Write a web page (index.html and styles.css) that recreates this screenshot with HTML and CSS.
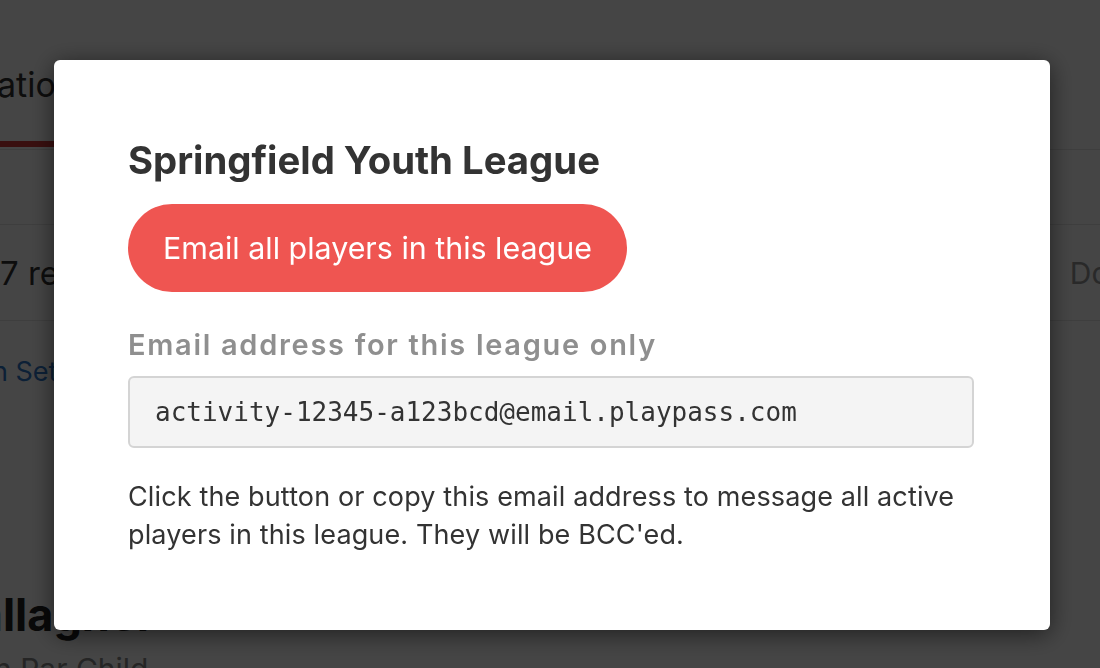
FILE: index.html
```html
<!DOCTYPE html>
<html lang="en">
<head>
<meta charset="utf-8">
<title>Springfield Youth League</title>
<link rel="stylesheet" href="styles.css">
</head>
<body>
<div class="page">
  <header class="tabs">
    <div class="tab tab-active">ation Details</div>
  </header>
  <div class="subbar"></div>
  <div class="row">
    <span class="count">7 registrations</span>
    <span class="row-action">Download</span>
  </div>
  <div class="links">
    <a class="link">n Settings</a>
  </div>
  <section class="person">
    <h2 class="person-name">Gallagher</h2>
    <p class="person-role">n Par Child</p>
  </section>
</div>

<div class="overlay">
  <div class="modal">
    <h1 class="modal-title">Springfield Youth League</h1>
    <button class="btn-email">Email all players in this league</button>
    <label class="field-label" for="league-email">Email address for this league only</label>
    <input class="field-input" id="league-email" type="text" value="activity-12345-a123bcd@email.playpass.com" readonly>
    <p class="modal-note">Click the button or copy this email address to message all active players in this league. They will be BCC'ed.</p>
  </div>
</div>
</body>
</html>
```

FILE: styles.css
```css
* { box-sizing: border-box; }

html, body {
  margin: 0;
  padding: 0;
  height: 100%;
  overflow: hidden;
}

body {
  background: #ffffff;
  font-family: Inter, "Noto Sans", sans-serif;
  color: #333333;
}

/* underlying page */
.page {
  display: flex;
  flex-direction: column;
  white-space: nowrap;
}

.tabs {
  height: 150px;
  border-bottom: 1px solid #e6e6e6;
  display: flex;
  align-items: flex-end;
}

.tab {
  font-size: 34px;
  line-height: 40px;
  color: #333333;
  padding-bottom: 36px;
  border-bottom: 6px solid #d23a3a;
  margin-bottom: 2px;
  margin-left: -3px;
}

.subbar {
  height: 75px;
  border-bottom: 1px solid #e6e6e6;
}

.row {
  height: 96px;
  border-bottom: 1px solid #e6e6e6;
  display: flex;
  align-items: center;
  justify-content: space-between;
}

.count {
  font-size: 33px;
  color: #333333;
}

.row-action {
  font-size: 30px;
  color: #999999;
  margin-right: -112px;
}

.links {
  padding-top: 34px;
}

.link {
  font-size: 27px;
  color: #2f78c8;
  margin-left: -8px;
}

.person {
  margin-top: 201px;
}

.person-name {
  margin: 0 0 0 -57px;
  font-size: 45px;
  line-height: 52px;
  font-weight: 700;
  color: #222222;
}

.person-role {
  margin: 8px 0 0 -6px;
  font-size: 30px;
  line-height: 40px;
  color: #888888;
}

/* overlay + modal */
.overlay {
  position: fixed;
  inset: 0;
  background: rgba(0, 0, 0, 0.73);
  display: flex;
  align-items: flex-start;
  padding: 60px 0 0 54px;
}

.modal {
  width: 996px;
  height: 570px;
  background: #ffffff;
  border-radius: 6px;
  box-shadow: 0 4px 24px rgba(0, 0, 0, 0.55);
  padding: 78px 74px 0 74px;
  display: flex;
  flex-direction: column;
  align-items: flex-start;
}

.modal-title {
  margin: 0;
  font-size: 38.3px;
  line-height: 44px;
  font-weight: 700;
  color: #333333;
}

.btn-email {
  margin-top: 22px;
  height: 88px;
  padding: 0 35px;
  border: none;
  border-radius: 44px;
  background: #ef5551;
  color: #ffffff;
  font-family: Inter, "Noto Sans", sans-serif;
  font-size: 30.4px;
  font-weight: 400;
}

.field-label {
  margin-top: 35px;
  font-size: 29px;
  line-height: 36px;
  font-weight: 600;
  letter-spacing: 1.7px;
  color: #8f8f8f;
}

.field-input {
  margin-top: 13px;
  width: 846px;
  height: 72px;
  padding: 0 25px;
  border: 2px solid #d4d4d4;
  border-radius: 6px;
  background: #f4f4f4;
  font-family: "DejaVu Sans Mono", "Liberation Mono", monospace;
  font-size: 26px;
  color: #333333;
}

.modal-note {
  margin: 30px 0 0 0;
  font-size: 27px;
  line-height: 38px;
  letter-spacing: 0.13px;
  color: #333333;
  width: 846px;
}
```
